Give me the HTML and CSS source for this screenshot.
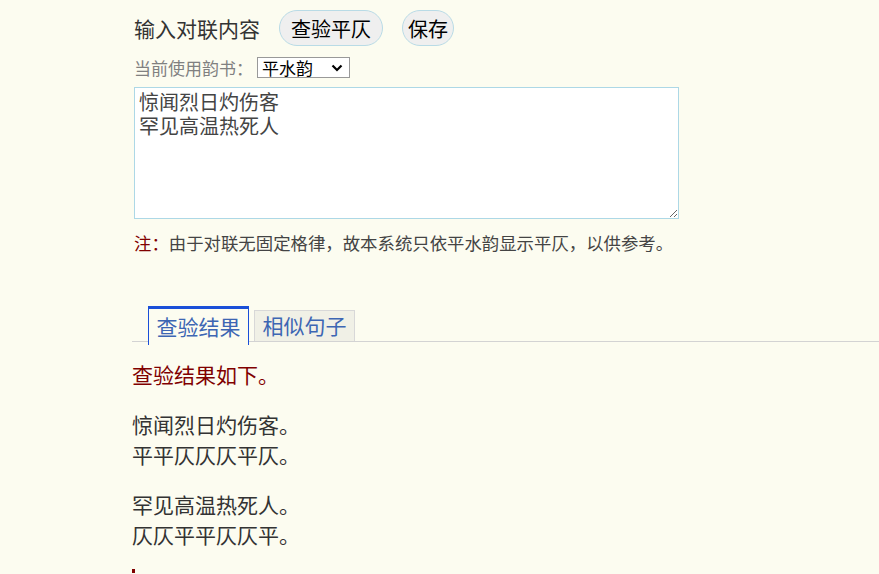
FILE: index.html
```html
<!DOCTYPE html>
<html lang="zh-CN">
<head>
  <meta charset="UTF-8">
  <meta name="viewport" content="width=device-width, initial-scale=1.0">
  <title>对联平仄查验</title>
  <link rel="stylesheet" href="styles.css">
</head>
<body>

  <div class="page">
    <div class="toolbar">
      <span class="toolbar-title">输入对联内容</span>
      <button type="button" class="btn btn-check">查验平仄</button>
      <button type="button" class="btn btn-save">保存</button>
    </div>

    <div class="yunshu">
      <label for="yunshu">当前使用韵书：</label>
      <span class="select-wrap">
        <select id="yunshu" name="yunshu">
          <option>平水韵</option>
          <option>词林正韵</option>
          <option>中华新韵</option>
        </select>
        <svg class="select-arrow" width="12" height="8" viewBox="0 0 12 8">
          <polyline points="1.5,1.5 6,6 10.5,1.5" fill="none" stroke="#000" stroke-width="2.2"/>
        </svg>
      </span>
    </div>

    <textarea class="couplet" id="couplet" name="couplet">惊闻烈日灼伤客
罕见高温热死人</textarea>

    <p class="note"><span class="note-mark">注：</span>由于对联无固定格律，故本系统只依平水韵显示平仄，以供参考。</p>

    <div class="tabs">
      <span class="tab tab-active">查验结果</span>
      <span class="tab">相似句子</span>
    </div>

    <div class="result">
      <p class="result-title">查验结果如下。</p>
      <p class="result-line">惊闻烈日灼伤客。<br>平平仄仄仄平仄。</p>
      <p class="result-line">罕见高温热死人。<br>仄仄平平仄仄平。</p>
      <span class="result-end"></span>
    </div>
  </div>

</body>
</html>
```

FILE: styles.css
```css
body {
  margin: 0;
  background-color: #fcfcf0;
  font-family: "Noto Sans CJK SC", "Noto Sans", sans-serif;
  color: #333;
}

.page {
  padding-left: 132px;
}

.toolbar {
  display: flex;
  align-items: center;
  padding-top: 10px;
  height: 36px;
}

.toolbar-title {
  margin-left: 2px;
  margin-right: 19px;
  font-size: 21px;
  line-height: 36px;
}

.btn {
  height: 36px;
  padding: 0 11px;
  font-family: inherit;
  font-size: 20px;
  color: #000;
  background-color: #efefef;
  border: 1px solid #b9dbe6;
  border-radius: 18px;
  cursor: pointer;
}

.btn-save {
  margin-left: 19px;
  padding: 0 5px;
}

.yunshu {
  display: flex;
  align-items: center;
  margin-top: 11px;
  margin-left: 2px;
  height: 21px;
}

.yunshu label {
  font-size: 17px;
  color: #808080;
  margin-right: 4px;
}

.select-wrap {
  position: relative;
  display: block;
  height: 21px;
}

.select-wrap select {
  appearance: none;
  -webkit-appearance: none;
  display: block;
  box-sizing: border-box;
  width: 93px;
  height: 21px;
  padding: 0 0 0 4px;
  font-family: inherit;
  font-size: 17px;
  line-height: 19px;
  color: #000;
  background-color: #fff;
  border: 1px solid #999;
  border-radius: 0;
}

.select-arrow {
  position: absolute;
  top: 7px;
  right: 7px;
  pointer-events: none;
}

.couplet {
  display: block;
  box-sizing: border-box;
  margin: 9px 0 0 2px;
  width: 545px;
  height: 132px;
  padding: 2px 4px;
  font-family: inherit;
  font-size: 20px;
  line-height: 24px;
  color: #444;
  background-color: #fff;
  border: 1px solid #add8e6;
}

.note {
  margin: 12px 0 0 2px;
  font-size: 17.4px;
  line-height: 24px;
  color: #444;
}

.note-mark {
  color: #800000;
}

.tabs {
  display: flex;
  align-items: flex-end;
  gap: 5px;
  margin-top: 51px;
  padding-left: 16px;
  border-bottom: 1px solid #d3d3d3;
}

.tab {
  box-sizing: border-box;
  width: 101px;
  height: 31px;
  font-size: 21px;
  line-height: 29px;
  text-align: center;
  color: #3d66b3;
  background-color: #f0f0e6;
  border: 1px solid #d8d8d8;
  border-bottom: none;
}

.tab-active {
  height: 39px;
  margin-bottom: -4px;
  padding-top: 1px;
  line-height: 33px;
  background-color: #fcfcf0;
  border: 1px solid #1a4fd8;
  border-top-width: 3px;
  border-bottom: none;
}

.result {
  padding-top: 17px;
}

.result p {
  margin: 0 0 20px;
  font-size: 21px;
  line-height: 30px;
}

.result-title {
  color: #800000;
}

.result-end {
  display: block;
  width: 3px;
  height: 4px;
  background-color: #800000;
}
```
